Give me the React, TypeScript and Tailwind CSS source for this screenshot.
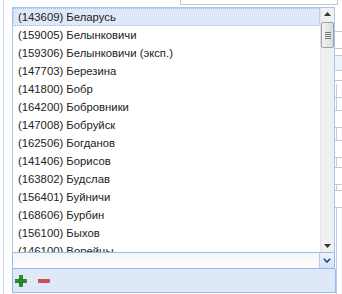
const items = [
  "(143609) Беларусь",
  "(159005) Белынковичи",
  "(159306) Белынковичи (эксп.)",
  "(147703) Березина",
  "(141800) Бобр",
  "(164200) Бобровники",
  "(147008) Бобруйск",
  "(162506) Богданов",
  "(141406) Борисов",
  "(163802) Будслав",
  "(156401) Буйничи",
  "(168606) Бурбин",
  "(156100) Быхов",
  "(146100) Ворейцы",
];

function PlusIcon() {
  return (
    <svg width="12" height="12" viewBox="0 0 12 12">
      <rect x="4.3" y="0.5" width="3.4" height="11" fill="#249024" stroke="#176617" strokeWidth="0.6" />
      <rect x="0.5" y="4.3" width="11" height="3.4" fill="#249024" stroke="#176617" strokeWidth="0.6" />
      <rect x="4.6" y="4.6" width="2.8" height="2.8" fill="#249024" />
    </svg>
  );
}

function MinusIcon() {
  return (
    <svg width="12" height="12" viewBox="0 0 12 12">
      <rect x="0.5" y="4.5" width="11" height="3" fill="#e0464a" stroke="#b02a2e" strokeWidth="0.6" />
    </svg>
  );
}

function ScrollArrow({ up }: { up?: boolean }) {
  return (
    <div className="h-[12px] flex items-center justify-center">
      <svg width="7" height="4" viewBox="0 0 7 4">
        {up ? <polygon points="0,4 7,4 3.5,0" fill="#333" /> : <polygon points="0,0 7,0 3.5,4" fill="#333" />}
      </svg>
    </div>
  );
}

export default function App() {
  return (
    <div
      className="relative w-[342px] h-[294px] overflow-hidden bg-white text-[11.3px] text-[#222]"
      style={{ fontFamily: '"Liberation Sans", Arial, sans-serif' }}
    >
      {/* form behind the dropdown */}
      <div className="absolute left-[3px] top-0 bottom-0 w-px bg-[#c4d6ee]" />
      <div className="absolute left-[180px] -top-[10px] w-[158px] h-[15px] border border-[#c8c8c8] bg-white" />
      <div className="absolute left-[330px] top-[31px] w-[20px] h-[18px] border border-[#c8c8c8] bg-white" />
      <div className="absolute left-[330px] top-[55px] w-[20px] h-[16px] border border-[#c8c8c8] bg-[#eef3fa]" />
      <div className="absolute left-[330px] top-[80px] w-[20px] h-[18px] border border-[#c8c8c8] bg-white" />
      <div className="absolute left-[336px] top-[84px] bottom-0 w-px bg-[#b8d0f0]" />
      <div className="absolute left-[330px] top-[110px] w-[20px] h-[18px] border border-[#c8c8c8] bg-white" />
      <div className="absolute left-[330px] top-[140px] w-[20px] h-[18px] border border-[#c8c8c8] bg-white" />
      <div className="absolute left-[330px] top-[167px] w-[20px] h-[18px] border border-[#c8c8c8] bg-white" />
      <div className="absolute left-[330px] top-[190px] w-[20px] h-[18px] border border-[#c8c8c8] bg-white" />

      {/* dropdown list */}
      <div className="absolute left-[12px] top-[7px] w-[323px] h-[246px] border border-[#a8c6ee] bg-white flex">
        <div className="flex-1 overflow-hidden">
          {items.map((t, i) => (
            <div
              key={t}
              className={
                "h-[18px] leading-[16px] pl-[4px] whitespace-nowrap border " +
                (i === 0 ? "bg-[#dfe8f6] border-dotted border-[#a3bae9]" : "border-transparent")
              }
            >
              {t}
            </div>
          ))}
        </div>
        <div className="w-[14px] bg-[#f0f0f0] border-l border-[#e4e4e4] flex flex-col">
          <ScrollArrow up />
          <div className="mt-[2px] h-[26px] rounded-[2px] border border-[#a0a0a0] bg-gradient-to-r from-[#f4f4f4] to-[#dcdcdc] flex flex-col items-center justify-center gap-[1px]">
            <div className="w-[6px] h-px bg-[#777]" />
            <div className="w-[6px] h-px bg-[#777]" />
            <div className="w-[6px] h-px bg-[#777]" />
            <div className="w-[6px] h-px bg-[#777]" />
          </div>
          <div className="flex-1" />
          <ScrollArrow />
        </div>
      </div>

      {/* combo field */}
      <div className="absolute left-[12px] top-[252px] w-[323px] h-[17px] flex border border-[#99bbe8] bg-gradient-to-b from-[#f4f4f4] to-white">
        <div className="flex-1" />
        <div className="w-[15px] border-l border-[#b5ccea] bg-gradient-to-b from-[#eef4fc] to-[#d3e2f6] flex items-center justify-center">
          <svg width="8" height="5" viewBox="0 0 8 5">
            <polyline points="0.8,0.8 4,4 7.2,0.8" fill="none" stroke="#1e3f8a" strokeWidth="1.6" />
          </svg>
        </div>
      </div>

      {/* toolbar */}
      <div className="absolute left-[12px] top-[269px] w-[324px] h-[24px] bg-[#dfe8f6] border border-t-0 border-[#99bbe8] flex items-center gap-[11px] pl-[2px]">
        <PlusIcon />
        <MinusIcon />
      </div>
    </div>
  );
}
